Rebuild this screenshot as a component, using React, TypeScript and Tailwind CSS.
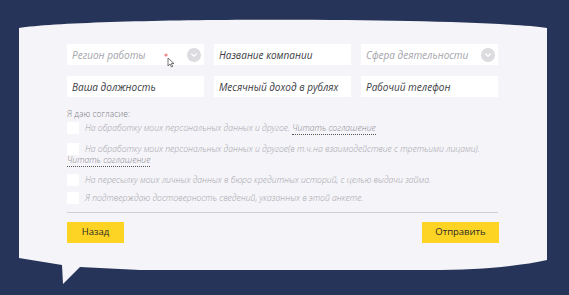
import React from "react";

const font = { fontFamily: '"Open Sans", "Noto Sans", sans-serif' };

function Chevron() {
  return (
    <span className="absolute right-[3px] top-1/2 -translate-y-1/2 w-[14px] h-[14px] rounded-full bg-[#dcdbe0] flex items-center justify-center">
      <svg width="8" height="6" viewBox="0 0 8 6">
        <path d="M1.5 1.8 L4 4.2 L6.5 1.8" fill="none" stroke="#ffffff" strokeWidth="1.2" strokeLinecap="round" strokeLinejoin="round" />
      </svg>
    </span>
  );
}

function Field({ text, light, select }: { text: string; light?: boolean; select?: boolean }) {
  return (
    <div className="relative w-[137px] h-[21px] bg-white flex items-center pl-[5px]">
      <span className={`italic text-[10px] leading-none ${light ? "text-[#a4a4ab]" : "text-[#3c3c44]"}`}>{text}</span>
      {select && <Chevron />}
    </div>
  );
}

function Box() {
  return <span className="w-[12px] h-[12px] bg-white shrink-0" />;
}

const Link = () => (
  <span className="text-[#8a8a92] border-b border-dotted border-[#555]">Читать соглашение</span>
);

export default function App() {
  return (
    <div className="relative w-[569px] h-[295px] bg-[#27345a] overflow-hidden" style={font}>
      <svg className="absolute inset-0" width="569" height="295" viewBox="0 0 569 295">
        <path
          d="M19,28 C90,17 470,17 547,28 L547,260 C520,266 480,270 430,270 L140,270 L80,267 L63,284 L62,265 L19,258 Z"
          fill="#f5f4f8"
        />
      </svg>
      <div className="relative pl-[67px] pt-[44px] w-[498px]">
        <div className="grid grid-cols-3 gap-x-[10px] gap-y-[11px] w-[431px]">
          <Field text="Регион работы" light select />
          <Field text="Название компании" />
          <Field text="Сфера деятельности" light select />
          <Field text="Ваша должность" />
          <Field text="Месячный доход в рублях" />
          <Field text="Рабочий телефон" />
        </div>
        <div className="mt-[12px] h-[9px] text-[8.5px] leading-[9px] text-[#7e7e86] font-light">Я даю согласие:</div>
        <div className="mt-[4px] flex flex-col text-[8.6px] leading-[12px] italic text-[#a3a3ab] font-light">
          <div className="flex items-center gap-[6px] h-[12px]">
            <Box />
            <span>
              На обработку моих персональных данных и другое. <Link />
            </span>
          </div>
          <div className="mt-[9px] flex items-center gap-[6px] h-[12px]">
            <Box />
            <span>На обработку моих персональных данных и другое(в т.ч.на взаимодействие с третьими лицами).</span>
          </div>
          <div className="h-[11px] leading-[11px]">
            <Link />
          </div>
          <div className="mt-[7px] flex items-center gap-[6px] h-[13px]">
            <Box />
            <span>На пересылку моих личных данных в бюро кредитных историй, с целью выдачи займа.</span>
          </div>
          <div className="mt-[6px] flex items-center gap-[6px] h-[12px]">
            <Box />
            <span>Я подтверждаю достоверность сведений, указанных в этой анкете.</span>
          </div>
        </div>
        <div className="mt-[8px] h-px bg-[#cfcfd4] w-[431px]" />
        <div className="mt-[9px] flex justify-between w-[432px]">
          <button className="w-[57px] h-[21px] bg-[#fdd423] text-[9.5px] text-[#2a2a2a]">Назад</button>
          <button className="w-[77px] h-[21px] bg-[#fdd423] text-[9.5px] text-[#2a2a2a]">Отправить</button>
        </div>
      </div>
      <svg className="absolute left-[163px] top-[52px]" width="12" height="16" viewBox="0 0 12 16">
        <circle cx="3" cy="3" r="1.6" fill="#f08a8a" />
        <path d="M5 6 L5 14 L7 12 L8.5 15 L9.7 14.4 L8.3 11.5 L11 11.5 Z" fill="#ffffff" stroke="#555" strokeWidth="0.8" />
      </svg>
    </div>
  );
}
